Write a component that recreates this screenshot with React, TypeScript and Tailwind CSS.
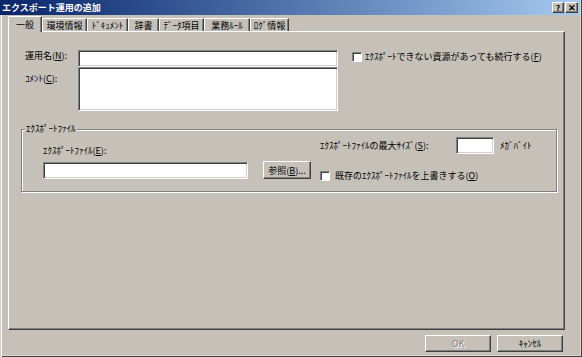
import React from "react";

const sunken =
    "bg-white border border-t-[#808080] border-l-[#808080] border-b-white border-r-white shadow-[inset_1px_1px_0_#404040,inset_-1px_-1px_0_#d4d0c8]";
const raised =
    "bg-[#c5c1b9] border border-t-white border-l-white border-b-[#404040] border-r-[#404040] shadow-[inset_-1px_-1px_0_#808080]";
const checkbox =
    "w-[10px] h-[10px] shrink-0 bg-white border border-t-[#808080] border-l-[#808080] border-b-white border-r-white shadow-[inset_1px_1px_0_#404040]";

const tabs = [
    { label: "環境情報", w: "w-[45px]" },
    { label: "ﾄﾞｷｭﾒﾝﾄ", w: "w-[41px]" },
    { label: "辞書", w: "w-[31px]" },
    { label: "ﾃﾞｰﾀ項目", w: "w-[45px]" },
    { label: "業務ﾙｰﾙ", w: "w-[46px]" },
    { label: "ﾛｸﾞ情報", w: "w-[39px]" },
];

const App: React.FC = () => {
    return (
        <div className="w-[582px] h-[357px] flex flex-col bg-[#c5c1b9] text-[9px] leading-[11px] text-black font-['Noto_Sans_CJK_JP',sans-serif] shadow-[inset_1px_0_0_#d4d0c8,inset_2px_0_0_#fff,inset_-1px_-1px_0_#404040,inset_-2px_-2px_0_#dcd8d0] overflow-hidden">
            {/* title bar */}
            <div className="h-[15px] mr-[2px] flex items-center justify-between pl-[2px] pr-[2px] bg-linear-to-r from-[#0a246a] to-[#a6caf0]">
                <span className="text-white font-bold">エクスポート運用の追加</span>
                <div className="flex gap-[1px]">
                    <div className={`${raised} w-[12px] h-[11px] flex items-center justify-center font-bold text-[8px] leading-none`}>?</div>
                    <div className={`${raised} w-[13px] h-[11px] flex items-center justify-center font-bold text-[9px] leading-none`}>✕</div>
                </div>
            </div>

            {/* tabs */}
            <div className="h-[16px] ml-[8px] flex items-end">
                <div className="relative z-10 -mb-px w-[34px] h-[16px] bg-[#c5c1b9] border-l border-t border-white border-r border-r-[#404040] shadow-[inset_-1px_0_0_#808080] rounded-t-[1px] flex items-start justify-center pt-[2px]">
                    一般
                </div>
                {tabs.map((t) => (
                    <div
                        key={t.label}
                        className={`${t.w} h-[13px] border-l border-t border-white border-r border-r-[#404040] shadow-[inset_-1px_0_0_#808080] rounded-t-[1px] flex items-start justify-center pt-[1px]`}
                    >
                        {t.label}
                    </div>
                ))}
            </div>

            {/* panel */}
            <div className="ml-[8px] w-[557px] h-[299px] border border-t-white border-l-white border-b-[#404040] border-r-[#404040] shadow-[inset_-1px_-1px_0_#808080] pt-[18px]">
                <div className="flex items-start ml-[16px]">
                    <div className="flex flex-col">
                        <div className="flex items-start">
                            <div className="w-[53px]">
                                運用名(<u>N</u>):
                            </div>
                            <div className={`${sunken} w-[260px] h-[17px]`} />
                        </div>
                        <div className="flex items-start">
                            <div className="w-[53px] pt-[6px]">
                                ｺﾒﾝﾄ(<u>C</u>):
                            </div>
                            <div className={`${sunken} w-[260px] h-[44px]`} />
                        </div>
                    </div>
                    <div className="ml-[14px] mt-[1px] flex items-center gap-[3px]">
                        <div className={checkbox} />
                        <span>ｴｸｽﾎﾟｰﾄできない資源があっても続行する(<u>F</u>)</span>
                    </div>
                </div>

                {/* group box */}
                <div className="relative ml-[12px] mt-[18px] w-[536px] h-[63px] border border-[#808080] shadow-[inset_1px_1px_0_#fff,1px_1px_0_#fff] flex items-start">
                    <span className="absolute top-[-7px] left-[3px] px-[1px] bg-[#c5c1b9]">ｴｸｽﾎﾟｰﾄﾌｧｲﾙ</span>
                    <div className="ml-[21px] w-[205px] flex flex-col">
                        <div className="mt-[15px]">
                            ｴｸｽﾎﾟｰﾄﾌｧｲﾙ(<u>E</u>):
                        </div>
                        <div className={`${sunken} mt-[6px] h-[17px]`} />
                    </div>
                    <div className={`${raised} ml-[15px] mt-[31px] w-[48px] h-[18px] flex items-center justify-center`}>
                        参照(<u>B</u>)...
                    </div>
                    <div className="ml-[9px] mt-[7px] flex flex-col">
                        <div className="flex items-center">
                            <div className="w-[136px]">
                                ｴｸｽﾎﾟｰﾄﾌｧｲﾙの最大ｻｲｽﾞ(<u>S</u>):
                            </div>
                            <div className={`${sunken} w-[38px] h-[17px]`} />
                            <span className="ml-[6px]">ﾒｶﾞﾊﾞｲﾄ</span>
                        </div>
                        <div className="mt-[16px] flex items-center gap-[5px]">
                            <div className={checkbox} />
                            <span>既存のｴｸｽﾎﾟｰﾄﾌｧｲﾙを上書きする(<u>O</u>)</span>
                        </div>
                    </div>
                </div>
            </div>

            {/* buttons */}
            <div className="ml-[8px] w-[557px] mt-[5px] pr-[2px] flex justify-end gap-[6px]">
                <div className={`${raised} w-[66px] h-[17px] flex items-center justify-center text-[#808080] [text-shadow:1px_1px_0_#fff]`}>
                    OK
                </div>
                <div className={`${raised} w-[66px] h-[17px] flex items-center justify-center`}>
                    ｷｬﾝｾﾙ
                </div>
            </div>
        </div>
    );
};

export default App;
